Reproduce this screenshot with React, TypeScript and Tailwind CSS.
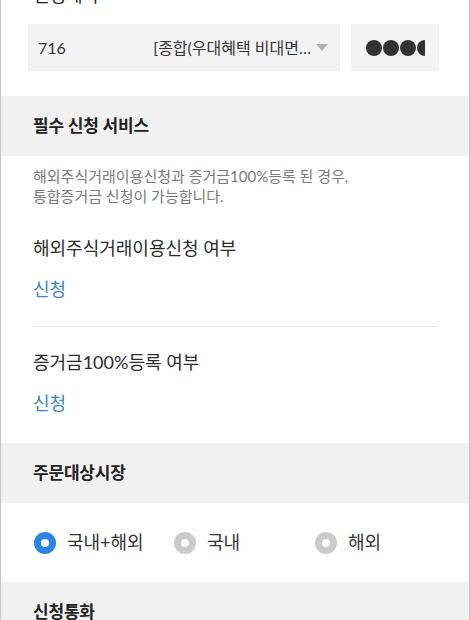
import { useState } from "react";

const markets = ["국내+해외", "국내", "해외"];

function SectionHeader({ title }: { title: string }) {
  return (
    <div className="bg-[#f1f1f1] h-[60px] flex items-center px-[32px]">
      <h2 className="text-[17px] font-bold text-[#222] tracking-[-0.2px]">{title}</h2>
    </div>
  );
}

function ApplyItem({ title, last }: { title: string; last?: boolean }) {
  return (
    <div className={`mx-[32px] pt-[23px] pb-[25px] ${last ? "" : "border-b border-[#ececec]"}`}>
      <p className="text-[18px] leading-[24px] text-[#2b2b2b]">{title}</p>
      <button className="block text-[18px] leading-[24px] text-[#3d86c2] mt-[17px]">신청</button>
    </div>
  );
}

export default function App() {
  const [market, setMarket] = useState(0);

  return (
    <main
      className="w-[470px] h-[620px] overflow-hidden bg-white border-x border-[#c6c6c6]"
      style={{ fontFamily: '"Lato", "Noto Sans CJK KR", sans-serif' }}
    >
      {/* 신청계좌 */}
      <div className="px-[32px] -mt-[17px]">
        <h2 className="text-[18px] leading-[24px] text-[#222]">신청계좌</h2>
      </div>
      <div className="flex gap-[11px] pl-[27px] pr-[30px] mt-[17px] pb-[25px]">
        <div className="flex-1 h-[47px] bg-[#f3f3f3] flex items-center pl-[10px] pr-[12px]">
          <span className="text-[16px] text-[#333]">716</span>
          <span className="ml-auto text-[16px] text-[#333] whitespace-nowrap">[종합(우대혜택 비대면…</span>
          <span className="ml-[5px] w-0 h-0 border-x-[6px] border-x-transparent border-t-[7px] border-t-[#b0b0b0]" />
        </div>
        <div className="w-[88px] h-[47px] bg-[#f3f3f3] flex items-center pl-[15px]">
          <div className="flex gap-[1px] w-[59px] overflow-hidden">
            {[0, 1, 2, 3].map((i) => (
              <span key={i} className="shrink-0 w-[16px] h-[16px] rounded-full bg-[#333]" />
            ))}
          </div>
        </div>
      </div>

      <SectionHeader title="필수 신청 서비스" />
      <p className="px-[32px] pt-[10px] text-[15px] leading-[20px] text-[#7a7a7a]">
        해외주식거래이용신청과 증거금100%등록 된 경우,
        <br />
        통합증거금 신청이 가능합니다.
      </p>
      <div className="pt-[7px] pb-[3px]">
        <ApplyItem title="해외주식거래이용신청 여부" />
        <ApplyItem title="증거금100%등록 여부" last />
      </div>

      <SectionHeader title="주문대상시장" />
      <div className="h-[79px] grid grid-cols-[140px_141px_1fr] items-center pl-[33px]">
        {markets.map((m, i) => (
          <button key={m} className="flex items-center gap-[11px]" onClick={() => setMarket(i)}>
            <span
              className={`w-[22px] h-[22px] rounded-full flex items-center justify-center ${
                market === i ? "bg-[#2a84e3]" : "bg-[#cbcbcb]"
              }`}
            >
              <span className="w-[8px] h-[8px] rounded-full bg-white" />
            </span>
            <span className="text-[18px] text-[#333]">{m}</span>
          </button>
        ))}
      </div>

      <SectionHeader title="신청통화" />
    </main>
  );
}
